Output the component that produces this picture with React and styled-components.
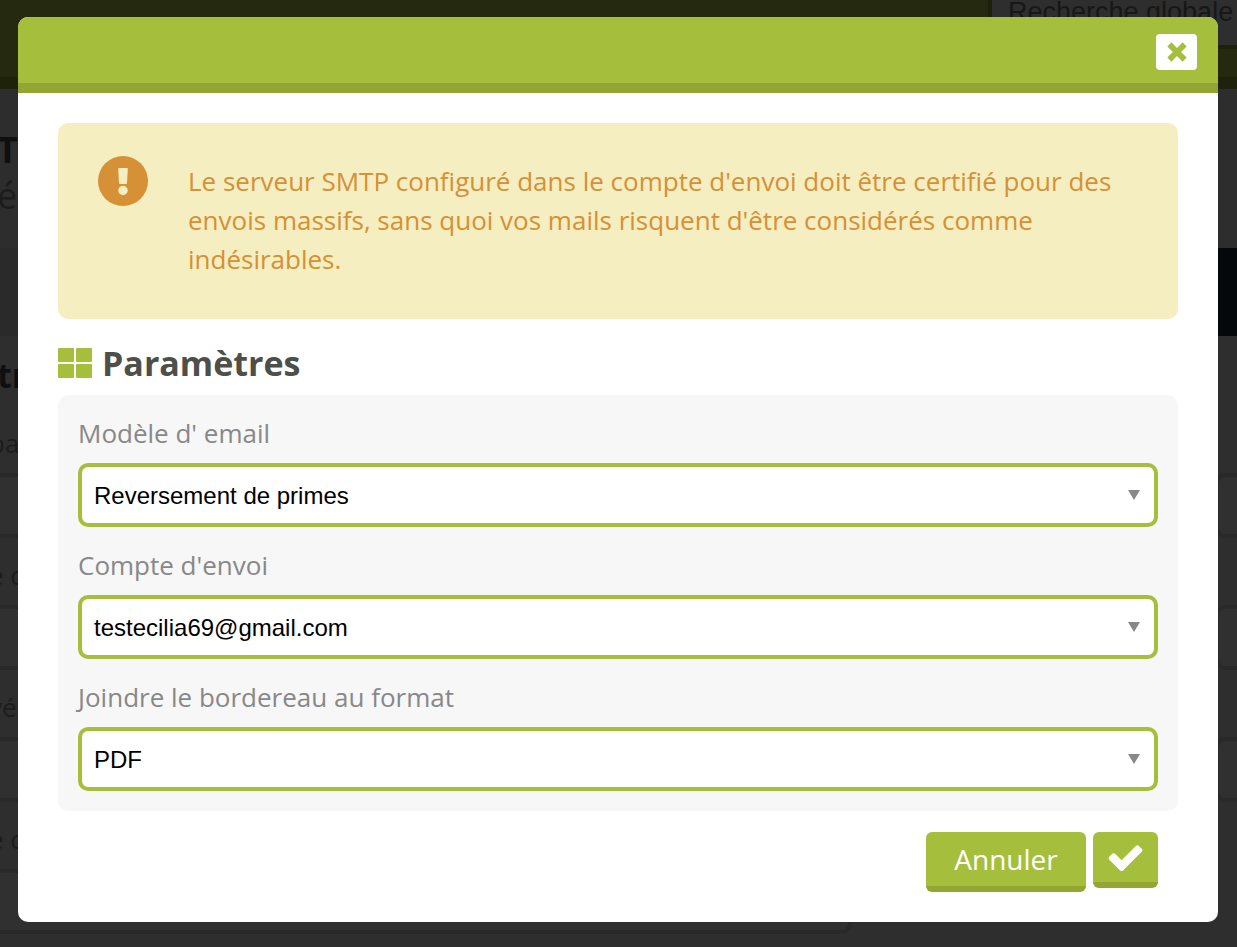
import React, { useState } from 'react';
import styled, { createGlobalStyle } from 'styled-components';

const formFields = [
    { id: 'template', label: "Modèle d' email", options: ['Reversement de primes'] },
    { id: 'account', label: "Compte d'envoi", options: ['testecilia69@gmail.com'] },
    { id: 'format', label: 'Joindre le bordereau au format', options: ['PDF'] },
];

const pageRows = [
    { label: 'pa', side: true },
    { label: 'e c', side: true },
    { label: 'vé', side: true },
    { label: 'e c', side: false },
];

function CloseIcon() {
    return (
        <svg width="20" height="20" viewBox="0 0 20 20" fill="currentColor" aria-hidden="true">
            <path d="M4.4.3L10 5.9 15.6.3 19.7 4.4 14.1 10l5.6 5.6-4.1 4.1L10 14.1l-5.6 5.6-4.1-4.1L5.9 10 .3 4.4z" />
        </svg>
    );
}

function CheckIcon() {
    return (
        <svg width="39" height="39" viewBox="0 0 1792 1792" fill="currentColor" aria-hidden="true">
            <path d="M1671 566q0 40-28 68l-724 724-136 136q-28 28-68 28t-68-28l-136-136-362-362q-28-28-28-68t28-68l136-136q28-28 68-28t68 28l294 295 656-657q28-28 68-28t68 28l136 136q28 28 28 68z" />
        </svg>
    );
}

function WarningIcon() {
    return (
        <svg width="50" height="50" viewBox="0 0 50 50" aria-hidden="true">
            <circle cx="25" cy="25" r="25" fill="#d69035" />
            <path d="M21 12h8q.8 0 .8.8l-.8 14.4q0 .8-.8.8h-6.4q-.8 0-.8-.8l-.8-14.4q0-.8.8-.8z" fill="#f5eec1" />
            <circle cx="25" cy="34.5" r="4.7" fill="#f5eec1" />
        </svg>
    );
}

function WindowsIcon() {
    return (
        <svg width="34" height="30" viewBox="0 0 34 30" fill="#a5bf3d" aria-hidden="true">
            <rect x="0" y="0" width="16" height="14" rx="1" />
            <rect x="18" y="0" width="16" height="14" rx="1" />
            <rect x="0" y="16" width="16" height="14" rx="1" />
            <rect x="18" y="16" width="16" height="14" rx="1" />
        </svg>
    );
}

function App() {
    const [values, setValues] = useState({
        template: 'Reversement de primes',
        account: 'testecilia69@gmail.com',
        format: 'PDF',
    });

    return (
        <>
            <GlobalStyle />
            <Page>
                <TopBar>
                    <SearchInput type="text" placeholder="Recherche globale" aria-label="Recherche globale" />
                </TopBar>
                <PageTitle>
                    <strong>T</strong>
                    <span>é</span>
                </PageTitle>
                <Banner />
                <SectionTitle>tr</SectionTitle>
                {pageRows.map((row, i) => (
                    <PageRow key={i}>
                        <PageLabel>{row.label}</PageLabel>
                        <PageBox $side="left" />
                        {row.side && <PageBox $side="right" />}
                    </PageRow>
                ))}
            </Page>

            <Overlay>
                <Modal role="dialog" aria-modal="true">
                    <ModalHeader>
                        <CloseButton type="button" aria-label="Fermer"><CloseIcon /></CloseButton>
                    </ModalHeader>
                    <ModalBody>
                        <Alert>
                            <WarningIcon />
                            <p>
                                Le serveur SMTP configuré dans le compte d'envoi doit être certifié pour des
                                envois massifs, sans quoi vos mails risquent d'être considérés comme
                                indésirables.
                            </p>
                        </Alert>
                        <Heading><WindowsIcon />Paramètres</Heading>
                        <Panel>
                            {formFields.map((field) => (
                                <Field key={field.id}>
                                    <label htmlFor={field.id}>{field.label}</label>
                                    <SelectWrap>
                                        <Select
                                            id={field.id}
                                            value={values[field.id]}
                                            onChange={(e) => setValues({ ...values, [field.id]: e.target.value })}
                                        >
                                            {field.options.map((o) => <option key={o}>{o}</option>)}
                                        </Select>
                                        <svg width="12" height="10" viewBox="0 0 12 10" aria-hidden="true">
                                            <path d="M0 0h12L6 10z" fill="#888" />
                                        </svg>
                                    </SelectWrap>
                                </Field>
                            ))}
                        </Panel>
                        <Actions>
                            <ActionButton type="button" $width={160} $height={60}>Annuler</ActionButton>
                            <ActionButton type="button" $width={65} $height={56} aria-label="Valider">
                                <CheckIcon />
                            </ActionButton>
                        </Actions>
                    </ModalBody>
                </Modal>
            </Overlay>
        </>
    );
}

export default App;

const GlobalStyle = createGlobalStyle`
    * {
        box-sizing: border-box;
    }
    body {
        margin: 0;
        background-color: #2e2e2e;
        font-family: 'Open Sans', 'Noto Sans', sans-serif;
    }
`

/* page under the dialog */
const Page = styled.div`
    height: 100vh;
    overflow: hidden;
    color: #171717;
`

const TopBar = styled.header`
    display: flex;
    justify-content: flex-end;
    align-items: flex-start;
    height: 89px;
    background-color: #25290f;
    border-bottom: 12px solid #1f220b;
`

const SearchInput = styled.input`
    width: 249px;
    height: 49px;
    padding: 0 0 20px 16px;
    border: 4px solid #1d200b;
    border-top: 0;
    border-right: 0;
    border-radius: 0;
    background-color: #2e2e2e;
    font-family: 'Liberation Sans', Arial, sans-serif;
    font-size: 27px;
    &::placeholder {
        color: #171717;
        opacity: 1;
    }
`

const PageTitle = styled.div`
    display: flex;
    flex-direction: column;
    height: 159px;
    margin-left: -3px;
    padding-top: 38px;
    background-color: #2d2d2d;
    font-size: 36px;
    line-height: 46px;
    strong {
        color: #0f0f0f;
    }
    span {
        color: #1c1c1c;
    }
`

const Banner = styled.div`
    height: 88px;
    background: linear-gradient(90deg, #2a2a2a 50%, #04080b 50%);
`

const SectionTitle = styled.h2`
    height: 70px;
    margin: 0 0 0 -3px;
    padding-top: 16px;
    color: #0f0f0f;
    font-size: 34px;
    line-height: 46px;
`

const PageRow = styled.div`
    display: grid;
    grid-template-columns: 863px 1fr;
    grid-template-rows: 67px 65px;
    margin-left: -11px;
`

const PageLabel = styled.span`
    grid-column: 1 / -1;
    padding-top: 19px;
    color: #1c1c1c;
    font-size: 26px;
    line-height: 36px;
`

const PageBox = styled.div`
    justify-self: ${({ $side }) => ($side === 'left' ? 'stretch' : 'end')};
    width: ${({ $side }) => ($side === 'left' ? 'auto' : '22px')};
    border: 4px solid #292929;
    border-right-width: ${({ $side }) => ($side === 'left' ? '4px' : '0')};
    border-radius: ${({ $side }) => ($side === 'left' ? '10px' : '10px 0 0 10px')};
    background-color: #303030;
`

/* dialog */
const Overlay = styled.div`
    position: absolute;
    inset: 0;
    padding: 17px 19px 25px 18px;
`

const Modal = styled.div`
    overflow: hidden;
    border-radius: 10px;
    background-color: #fff;
`

const ModalHeader = styled.header`
    display: flex;
    justify-content: flex-end;
    padding: 17px 21px 13px;
    border-bottom: 10px solid #93a532;
    background-color: #a5bf3d;
`

const CloseButton = styled.button`
    display: flex;
    align-items: center;
    justify-content: center;
    width: 41px;
    height: 36px;
    padding: 0;
    border: 0;
    border-radius: 4px;
    background-color: #fff;
    color: #a5bf3d;
    cursor: pointer;
`

const ModalBody = styled.div`
    padding: 30px 40px;
`

const Alert = styled.div`
    display: flex;
    align-items: flex-start;
    gap: 40px;
    padding: 33px 40px 40px;
    border-radius: 10px;
    background-color: #f5eec1;
    svg {
        flex-shrink: 0;
    }
    p {
        margin: 0;
        padding-top: 6px;
        color: #d69035;
        font-size: 26px;
        line-height: 39px;
    }
`

const Heading = styled.h2`
    display: flex;
    align-items: center;
    gap: 10px;
    height: 76px;
    margin: 0;
    padding-top: 12px;
    color: #4d4f48;
    font-size: 34px;
    line-height: 46px;
`

const Panel = styled.div`
    display: flex;
    flex-direction: column;
    gap: 20px;
    padding: 20px;
    border-radius: 10px;
    background-color: #f7f7f7;
`

const Field = styled.div`
    display: flex;
    flex-direction: column;
    gap: 12px;
    label {
        color: #888;
        font-size: 26px;
        line-height: 36px;
    }
`

const SelectWrap = styled.div`
    display: grid;
    align-items: center;
    > * {
        grid-area: 1 / 1;
    }
    svg {
        justify-self: end;
        margin-right: 18px;
        pointer-events: none;
    }
`

const Select = styled.select`
    appearance: none;
    width: 100%;
    height: 64px;
    padding: 0 40px 0 12px;
    border: 4px solid #a5bf3d;
    border-radius: 10px;
    background-color: #fff;
    color: #000;
    font-family: 'Liberation Sans', Arial, sans-serif;
    font-size: 24px;
`

const Actions = styled.div`
    display: flex;
    justify-content: flex-end;
    align-items: flex-start;
    gap: 7px;
    padding: 21px 20px 0;
`

const ActionButton = styled.button`
    display: flex;
    align-items: center;
    justify-content: center;
    width: ${({ $width }) => $width}px;
    height: ${({ $height }) => $height}px;
    padding: 0;
    border: 0;
    border-bottom: 6px solid #93a532;
    border-radius: 6px;
    background-color: #a5bf3d;
    color: #fff;
    font-family: inherit;
    font-size: 28px;
    cursor: pointer;
`
